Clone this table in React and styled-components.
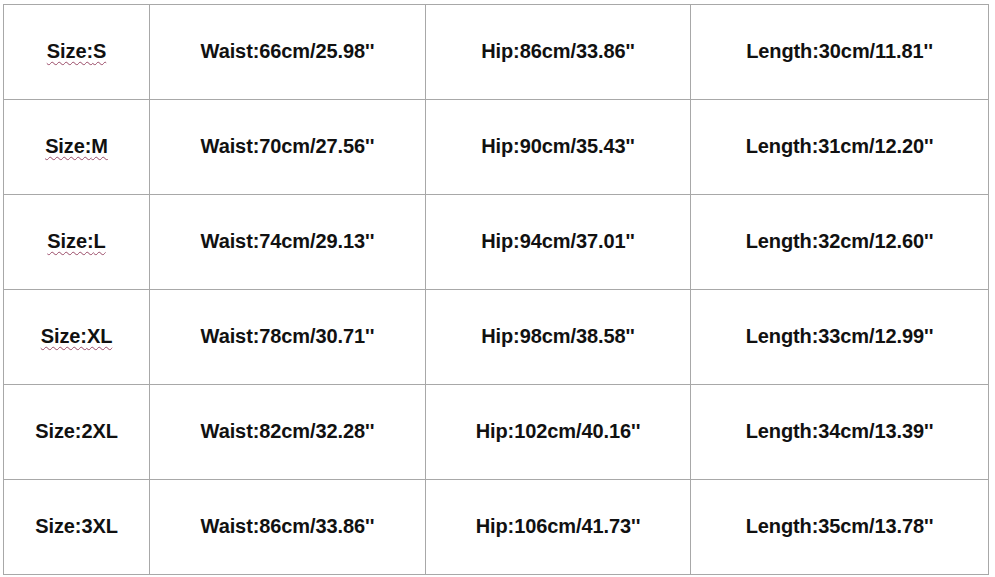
import React from "react";
import styled, { createGlobalStyle } from "styled-components";

const GlobalStyle = createGlobalStyle`
  html, body {
    margin: 0;
    padding: 0;
    background: #ffffff;
  }
  body {
    font-family: "Liberation Sans", Arial, sans-serif;
  }
`;

const Page = styled.div`
  width: 995px;
  height: 577px;
  padding: 4px 0 0 3px;
  box-sizing: border-box;
  background: #fff;
`;

const Table = styled.div`
  display: grid;
  width: 986px;
  height: 571px;
  grid-template-columns: 146px 276px 265px 1fr;
  grid-template-rows: repeat(6, 1fr);
  border-top: 1px solid #a8a8a8;
  border-left: 1px solid #a8a8a8;
  box-sizing: border-box;
`;

const Cell = styled.div`
  display: flex;
  align-items: center;
  justify-content: center;
  border-right: 1px solid #a8a8a8;
  border-bottom: 1px solid #a8a8a8;
  font-size: 20px;
  font-weight: bold;
  color: #111;
  letter-spacing: -0.1px;
  padding-bottom: 2px;
`;

const Label = styled.span`
  text-decoration: ${p => (p.$flagged ? "underline wavy #9a4a66" : "none")};
  text-decoration-thickness: 1px;
  text-underline-offset: 3px;
`;

const rows = [
  ["S", 66, "25.98", 86, "33.86", 30, "11.81", true],
  ["M", 70, "27.56", 90, "35.43", 31, "12.20", true],
  ["L", 74, "29.13", 94, "37.01", 32, "12.60", true],
  ["XL", 78, "30.71", 98, "38.58", 33, "12.99", true],
  ["2XL", 82, "32.28", 102, "40.16", 34, "13.39", false],
  ["3XL", 86, "33.86", 106, "41.73", 35, "13.78", false]
];

export default function App() {
  return (
    <Page>
      <GlobalStyle />
      <Table>
        {rows.map(([size, w, wi, h, hi, l, li, flagged]) => (
          <React.Fragment key={size}>
            <Cell>
              <Label $flagged={flagged}>Size:{size}</Label>
            </Cell>
            <Cell>Waist:{w}cm/{wi}''</Cell>
            <Cell>Hip:{h}cm/{hi}''</Cell>
            <Cell>Length:{l}cm/{li}''</Cell>
          </React.Fragment>
        ))}
      </Table>
    </Page>
  );
}
